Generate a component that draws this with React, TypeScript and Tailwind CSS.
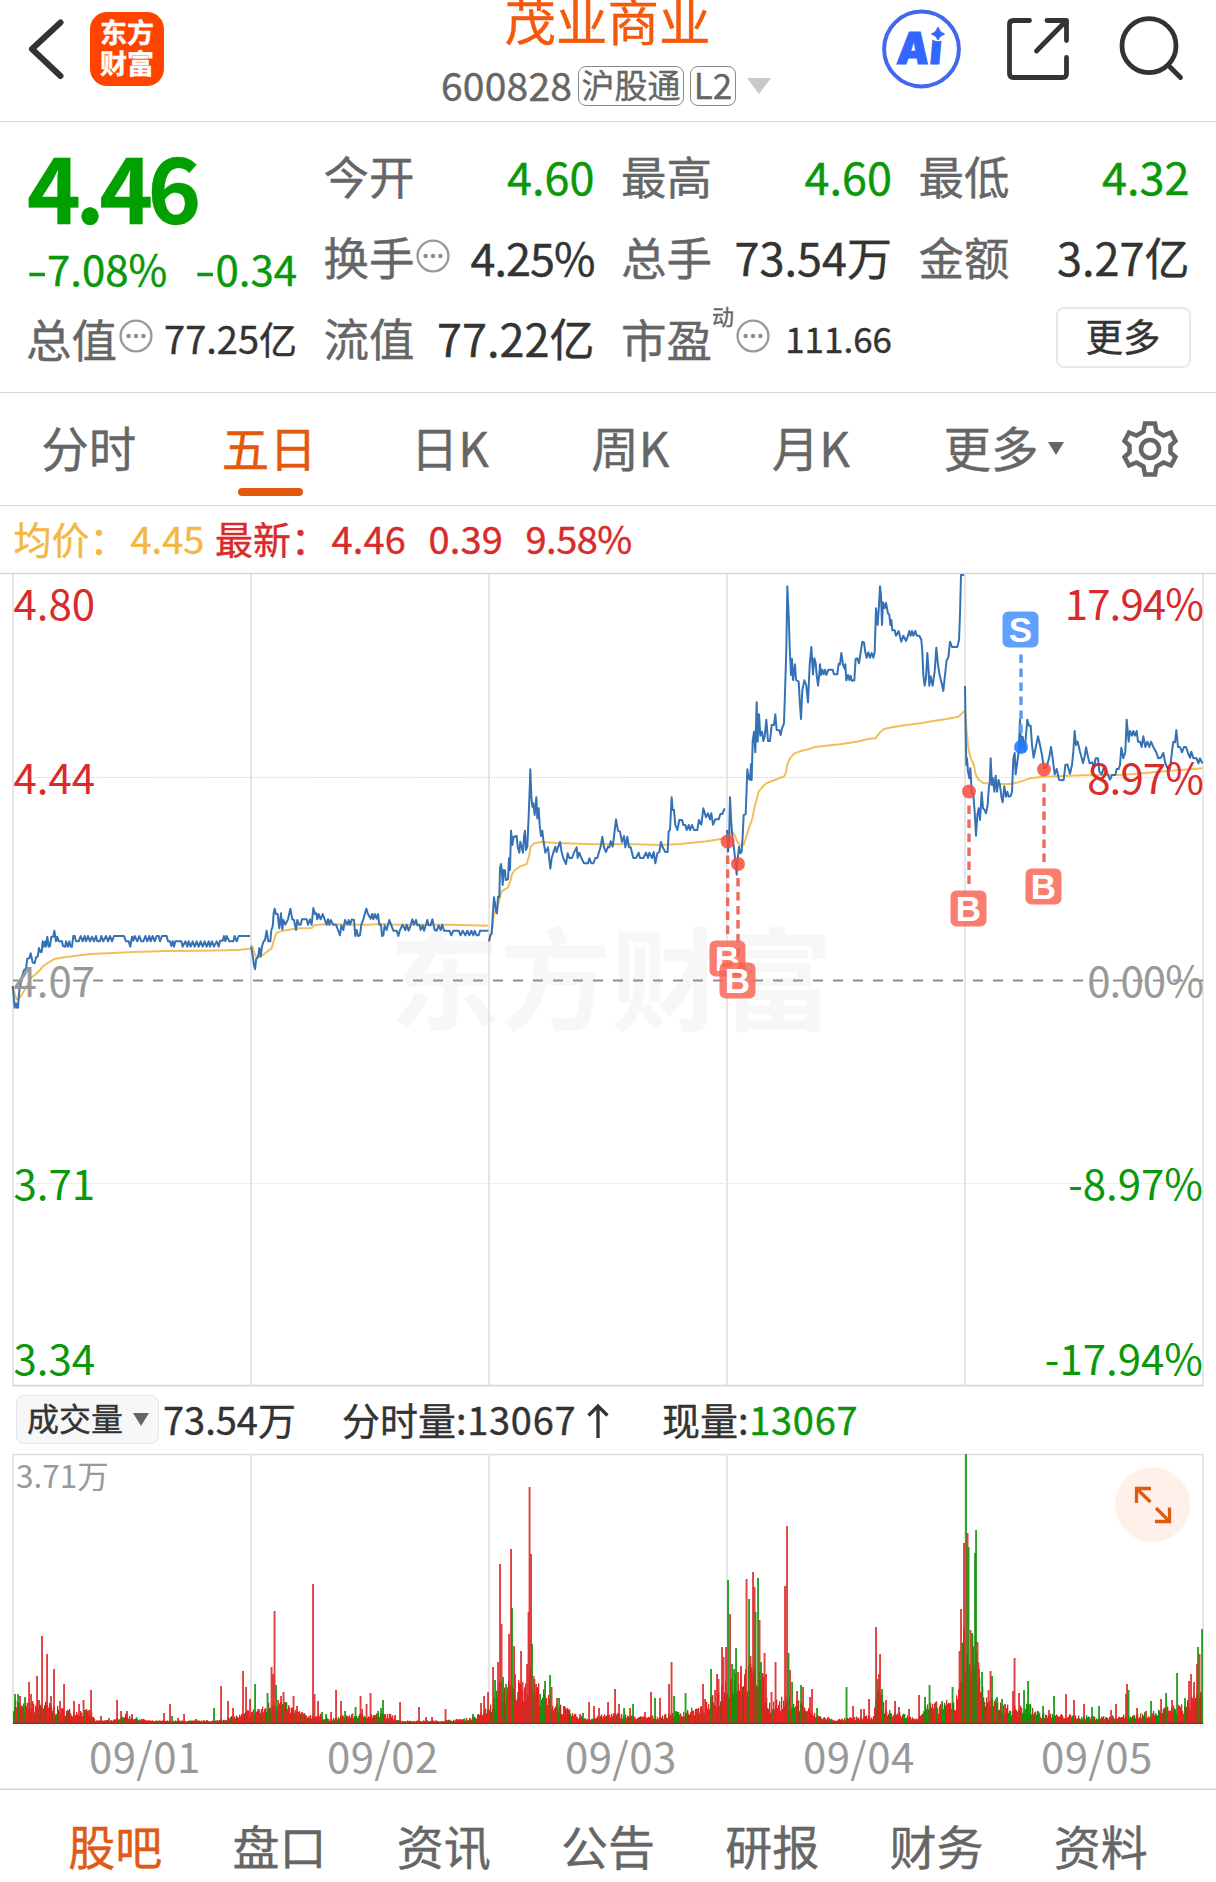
import React from "react";

const DAY_LINES = [13, 251, 489, 727, 965, 1203];

type Series = { dx: number; dy: number; price: string; avg: string };

// Each trading day is plotted on its own grid of one-third pixels, offset by dx / dy.
const SERIES: Series[] = [
  {
    dx: 0,
    dy: 740,
    price:
      "38,738 41,770 44,803 48,790 51,803 54,803 58,750 62,730 66,710 72,690 78,686 82,656 88,655 92,640 98,668 104,670 108,652 113,650 117,624 121,636 125,636 128,604 131,620 136,604 138,620 142,590 146,620 150,618 154,590 160,590 163,572 168,604 172,590 176,604 186,604 189,618 196,620 198,604 204,620 208,604 212,620 216,620 220,588 224,588 228,604 236,604 242,588 248,604 254,588 258,604 264,588 270,604 276,590 282,604 288,588 292,604 300,604 304,588 310,604 318,588 324,604 330,588 336,604 342,588 372,588 378,604 386,604 391,620 396,590 400,602 404,588 412,604 418,588 424,604 430,604 436,588 442,604 448,588 452,604 458,588 464,604 470,588 476,588 480,604 486,588 500,588 504,604 510,604 514,618 518,604 522,620 526,604 544,604 548,620 556,604 562,620 566,604 572,620 578,604 584,620 590,604 596,620 602,604 608,620 614,604 620,620 626,604 630,620 636,604 642,620 650,604 656,620 660,602 668,602 672,588 676,604 680,588 688,604 700,604 704,588 710,604 716,588 750,588",
    avg: "38,738 44,760 50,778 60,772 80,740 90,716 105,704 120,690 130,678 145,668 165,656 200,651 270,642 340,639 400,636 500,633 600,632 680,631 720,629 750,626",
  },
  {
    dx: 0,
    dy: 740,
    price:
      "753,620 757,640 762,675 765,688 769,655 774,652 778,624 782,650 786,620 790,606 795,600 800,572 805,604 811,604 814,570 818,560 821,520 824,506 828,522 833,522 836,550 838,565 843,520 847,568 850,540 856,554 864,538 871,506 877,538 882,540 888,570 892,540 897,554 902,554 906,538 920,538 924,554 930,538 935,554 940,504 945,522 949,520 952,538 956,522 962,538 968,522 974,538 980,554 984,538 988,554 992,540 1000,554 1008,554 1014,570 1020,586 1024,556 1030,570 1035,540 1042,554 1046,540 1050,554 1056,538 1062,540 1066,588 1070,570 1074,588 1080,586 1084,554 1090,538 1095,520 1099,506 1104,522 1112,536 1116,522 1120,538 1124,522 1130,536 1134,522 1138,554 1143,554 1146,588 1150,586 1154,556 1160,570 1164,554 1168,540 1174,556 1180,572 1190,572 1195,588 1200,570 1208,554 1216,570 1220,554 1226,572 1232,556 1237,538 1242,554 1248,540 1252,556 1258,554 1262,570 1268,556 1272,572 1278,554 1282,540 1286,556 1292,556 1297,538 1304,570 1310,572 1316,556 1322,570 1327,554 1332,572 1348,572 1354,586 1360,572 1376,572 1382,586 1388,572 1396,586 1402,572 1408,586 1414,572 1420,586 1424,572 1430,586 1436,586 1440,572 1465,572",
    avg: "753,614 758,622 766,648 775,650 785,648 795,640 808,630 815,625 820,606 826,588 830,578 850,572 880,567 900,565 936,564 942,556 970,553 1100,554 1140,552 1200,554 1350,554 1465,557",
  },
  {
    dx: 480,
    dy: 730,
    price:
      "27,634 31,615 35,612 38,560 42,502 45,520 48,545 51,550 54,500 58,500 60,415 63,402 66,430 68,465 71,420 75,422 77,450 84,448 87,385 90,420 93,302 97,345 101,320 110,318 113,350 118,368 121,335 125,350 129,368 132,320 135,302 138,360 142,350 146,260 149,180 151,118 154,200 157,230 160,220 164,255 169,202 172,265 176,235 179,285 183,318 187,302 190,330 196,368 204,352 207,380 211,416 215,385 220,368 226,350 230,366 234,352 240,336 245,366 250,385 258,402 263,370 268,384 276,384 282,368 290,352 293,384 298,368 304,384 312,400 324,400 328,385 334,400 340,400 346,384 352,384 357,366 362,350 367,320 372,352 378,366 384,350 388,352 392,334 398,350 402,320 408,268 414,302 420,305 426,336 432,318 436,352 442,320 447,352 452,352 460,384 468,384 476,368 480,384 490,384 498,368 504,384 508,368 516,384 521,366 526,400 532,370 538,366 543,336 548,352 556,366 563,366 566,305 570,300 575,202 578,240 582,240 586,285 592,300 598,270 606,270 610,285 616,285 620,300 626,285 630,300 636,285 642,300 652,300 657,270 664,284 670,235 678,262 684,250 690,268 694,250 699,284 706,268 716,268 721,252 727,252 734,235",
    avg: "27,634 36,600 42,552 50,540 58,510 64,485 74,478 84,473 92,450 96,432 105,420 120,410 140,402 148,375 152,350 162,340 185,336 230,339 340,343 440,342 540,345 600,342 680,334 727,326 735,325",
  },
  {
    dx: 700,
    dy: 565,
    price:
      "81,795 84,860 87,835 90,697 93,760 97,815 102,850 107,895 110,929 113,885 117,845 121,865 125,860 128,815 131,750 137,748 140,670 142,613 146,640 150,645 153,598 155,645 158,530 162,500 166,562 170,412 173,530 177,448 181,512 186,500 190,528 194,515 199,464 204,528 210,528 215,480 222,480 226,448 230,495 238,496 242,510 246,490 252,475 256,350 259,250 262,64 266,150 269,245 273,330 276,282 279,345 285,298 288,345 296,350 300,420 303,462 307,375 313,346 319,362 324,412 329,300 334,246 339,328 343,280 347,295 350,330 354,362 358,328 360,298 363,330 367,314 371,328 375,314 379,330 385,314 398,314 402,328 412,328 416,296 420,298 424,264 429,298 434,312 436,298 439,346 444,330 448,345 452,332 455,347 463,346 467,282 472,280 477,295 482,262 487,230 492,232 496,262 500,278 505,262 510,278 515,264 520,278 524,262 528,130 533,180 537,120 540,64 543,90 546,180 549,112 554,130 558,114 564,145 568,150 571,180 574,165 577,196 584,196 588,212 596,198 600,215 604,230 610,212 618,228 624,212 628,198 632,212 636,198 640,212 646,198 650,212 658,212 664,225 667,260 670,330 674,362 678,340 682,264 686,320 688,362 692,334 698,362 704,320 709,248 714,300 719,330 724,350 730,378 735,330 740,285 745,278 750,230 756,246 772,246 777,225 780,150 783,30 792,30",
    avg: "81,830 90,802 96,800 103,808 112,830 122,842 132,838 140,812 148,785 156,765 164,725 176,680 188,665 200,654 225,645 240,638 252,635 258,622 263,595 270,580 282,566 300,559 325,553 340,547 370,543 420,538 470,530 505,522 526,520 540,502 552,492 575,487 620,480 660,475 700,468 740,462 775,455 785,446 795,436",
  },
  {
    dx: 950,
    dy: 565,
    price:
      "45,363 47,500 49,600 51,580 54,620 58,640 61,610 65,680 70,690 74,740 78,812 82,750 86,730 90,765 95,682 99,730 104,735 108,745 113,720 117,660 119,660 122,580 126,660 129,640 133,680 137,632 141,680 146,645 150,662 155,700 158,712 163,664 168,695 172,680 176,695 182,693 186,680 190,580 194,564 197,628 202,590 206,560 210,464 214,562 218,515 224,560 228,510 232,464 237,482 242,482 246,540 251,578 257,548 264,514 270,540 276,570 282,610 290,605 297,580 303,546 308,580 314,628 320,612 327,644 336,646 341,645 346,600 352,598 360,626 366,600 370,560 374,498 378,540 383,530 390,560 395,578 399,595 404,575 408,547 414,575 419,595 427,592 432,608 437,580 444,580 448,620 455,628 460,612 468,612 474,630 480,644 486,630 492,630 496,630 500,612 506,612 510,600 514,548 520,580 526,560 530,464 536,530 540,498 546,512 550,498 555,512 560,498 564,530 570,530 575,546 580,514 586,546 592,530 598,546 603,530 610,546 618,560 625,580 633,578 640,564 646,595 654,612 660,612 666,560 670,530 675,532 679,496 684,546 690,546 696,562 702,546 708,546 714,564 720,578 724,560 730,580 740,580 745,595 750,580 757,595",
    avg: "45,436 50,500 55,550 62,580 72,600 76,625 84,642 100,654 140,657 180,657 205,652 240,640 280,635 400,631 520,629 560,626 680,616 757,610",
  },
];

// Typical minute volume along the x axis: [x, height].
const VOLUME_BASE: [number, number][] = [
  [13, 25], [22, 18], [40, 22], [60, 14], [90, 12], [95, 2], [115, 3], [122, 9], [135, 5], [150, 2], [215, 2], [240, 8], [248, 12], [262, 15], [275, 25], [290, 16], [305, 8], [320, 8], [330, 3], [345, 8], [370, 9], [388, 9], [400, 2], [440, 2], [465, 4], [478, 8], [490, 18], [500, 40], [515, 40], [530, 50], [545, 28], [560, 18], [575, 8], [590, 4], [610, 10], [640, 6], [660, 7], [680, 12], [700, 15], [715, 28], [728, 50], [740, 55], [760, 55], [768, 20], [785, 25], [800, 22], [812, 10], [825, 5], [835, 3], [850, 5], [872, 7], [878, 35], [886, 12], [900, 10], [915, 4], [925, 18], [955, 22], [963, 90], [975, 80], [985, 25], [1000, 20], [1010, 15], [1030, 18], [1040, 9], [1060, 8], [1100, 6], [1120, 7], [1150, 10], [1165, 15], [1185, 18], [1200, 40], [1203, 3],
];

// Spikes as "x,height" followed by g for a falling minute.
const SPIKES =
  "15,30g 18,30g 20,28 25,27g 29,42 31,30 37,48 39,24 42,88 47,70 51,28 54,55 60,23 64,40 74,23 79,20 83.5,24 89,14 91,34 101,8 109,6 117,24 121,13 127,13 132,10 143,5 164,11 170,20 172,8g 178,6 184,10 196,5 207,4 214,16g 221,38 228,23 233,16 243,53 246,37 247.5,14 250,25 255,40g 258,15 262,15 267.5,31g 271.5,57 273,50 274.5,113 276,39g 278,24 281,28 283.5,32 287,15 293.5,28 297,18 302,12 310,8 313,140 314.5,30 318,23 322,12g 326,10g 331,12 336,34 341,23 345,13g 355.5,17g 360.5,28 362,15 366.5,20 370.5,31 378,13g 381,16g 383,24g 395,9 400,22 419,17 426,7 432,7 445.5,15 460,5 473,10g 481,21 484,28 488,32 493,57 495,44g 498,62 500,160 501.5,100 503,47g 506,40g 509,90 511,175 512,116g 514,78 515,50 518,32 521,73 522.5,42 525,37 527,60 528.5,112 529.5,237 531,170 532,80g 533.5,48 536,40 540,30g 545,43g 550,49g 551.5,37 557,26 559,26g 564,18 580,10 583,11g 589,22 594,18 599,16 608,22 615,35 619,20 624,16g 630,16 633,20g 645,12 651,32 655,26g 660,26 669,40 671.5,62 674,28g 685.5,31g 691,12 697,15 703,40 705,25 711,55g 715,34 717,50 718.5,45 722,77 723.5,67 726,77 728,144g 730,110 732,60g 734,55g 736,76g 738,52 741,58 745,50 746.5,145 749,125g 750.5,68 753,152 754.5,137 755.5,112g 758,146g 759.5,104 761,62g 762.5,50 764.5,71 766,50 771.5,32 775.5,62 785,138 787,198 788.5,71g 790,54 792,42g 797,33 801,39g 803,37 810,27 812,35 817,16g 828,7 846.5,37g 853,18 861,15 864,15 869,25 876,97 877.5,45g 879,50 880,70 882,35g 886,24 895,23 899,17 909,15 919,29 925,27g 929.5,39g 936,18g 942,23g 947,20 952.5,37g 957,25 959.5,73 961,115 964,181 966,270g 967.5,191 968.5,177g 970.5,94 972,91g 973.5,62 975,171g 976,194g 977.5,82 979,55 982,52g 988.5,34 990.5,53 992,48g 997,27g 1002,25g 1005,20 1013,33 1014.5,66 1019,31 1024,34g 1028,43g 1030,20g 1043,18g 1049,14 1054,28g 1066,30 1074,24 1084,20 1092,17g 1099,18g 1111,14 1116,20 1126,30 1127,40 1128.5,34g 1137,16 1146,13 1151,23g 1161,25 1166,31g 1172,24 1177,51g 1185,26g 1189,43 1191,50 1194,42 1197,60 1198,77g 1199.5,70 1202,95g";

const RED = "#ee2222";
const GREEN = "#0a9608";
const BROWN = "#a23c16";

type Bar = { x: number; h: number; fill: string };

function baseHeight(x: number) {
  for (let i = 1; i < VOLUME_BASE.length; i++) {
    const [x1, h1] = VOLUME_BASE[i];
    const [x0, h0] = VOLUME_BASE[i - 1];
    if (x <= x1) return h0 + ((h1 - h0) * (x - x0)) / (x1 - x0);
  }
  return 2;
}

function buildBars(): Bar[] {
  let seed = 7;
  const rand = () => {
    seed = (seed * 16807) % 2147483647;
    return seed / 2147483647;
  };
  const bars: Bar[] = [];
  for (let x = 13; x < 1202; x += 1) {
    const h = 1.5 + baseHeight(x) * (0.45 + 0.65 * rand());
    const c = rand();
    const greenShare = x > 965 && x < 1160 ? 0.25 : 0.14;
    bars.push({ x, h, fill: c < greenShare ? GREEN : c < greenShare + 0.35 ? BROWN : RED });
  }
  return bars;
}

const BARS = buildBars();
const SPIKE_BARS: Bar[] = SPIKES.split(" ").map((s) => {
  const green = s.endsWith("g");
  const [x, h] = s.replace("g", "").split(",").map(Number);
  return { x, h, fill: green ? GREEN : "#dd2626" };
});

function Dots() {
  return (
    <svg width="34" height="34" viewBox="0 0 34 34" className="shrink-0">
      <circle cx="17" cy="17" r="15.4" fill="none" stroke="#9a9a9a" strokeWidth="2.4" />
      <circle cx="9.6" cy="17" r="2.2" fill="#8c8c8c" />
      <circle cx="17" cy="17" r="2.2" fill="#8c8c8c" />
      <circle cx="24.4" cy="17" r="2.2" fill="#8c8c8c" />
    </svg>
  );
}

function Header() {
  return (
    <header className="flex h-[122px] items-start border-b-[1.5px] border-[#d6d6d6]">
      <svg width="90" height="98" viewBox="0 0 90 98" className="shrink-0">
        <path d="M60.500 22.500 32 49 60.500 76" fill="none" stroke="#333" strokeWidth="6" strokeLinecap="round" strokeLinejoin="round" />
      </svg>
      <div className="mt-[12px] flex h-[74px] w-[74px] shrink-0 flex-col items-center justify-center rounded-[17px] bg-[#ff4400] pb-[5px] text-[27px] font-bold leading-[31px] text-white">
        <span>东方</span>
        <span>财富</span>
      </div>
      <div className="flex h-[121px] w-[718px] shrink-0 flex-col pl-[277px]">
        <div className="h-[53px] pl-[63.500px] text-[51.500px] leading-[37px] whitespace-nowrap text-[#f4590c]">茂业商业</div>
        <div className="-mt-px flex h-[68px] items-center">
          <span className="mt-[-5px] w-[137px] text-[39px] leading-[60px] tracking-[0.200px] text-[#666]">600828</span>
          <span className="flex h-[40px] w-[106px] items-center justify-center rounded-[8px] border-[1.5px] border-[#8a8a8a] pb-[5px] text-[33px] leading-[34px] text-[#666]">沪股通</span>
          <span className="ml-[6px] flex h-[40px] w-[46px] items-center justify-center rounded-[8px] border-[1.5px] border-[#8a8a8a] pb-[5px] text-[35px] leading-[34px] text-[#666]">L2</span>
          <svg width="24" height="16" viewBox="0 0 24 16" className="ml-[11px]">
            <path d="M0 0H24L12 16Z" fill="#c8c8c8" />
          </svg>
        </div>
      </div>
      <svg width="80" height="98" viewBox="882 0 80 98" className="shrink-0">
        <circle cx="921.500" cy="49" r="37.400" fill="none" stroke="#4169ee" strokeWidth="4" />
        <g transform="translate(896 63.500) skewX(-5) scale(0.92 1)">
          <text x="0" y="0" fontFamily="Inter, sans-serif" fontWeight="900" fontSize="44" letterSpacing="0.500" fill="#3366ff" stroke="#3366ff" strokeWidth="1.200">
            Ai
          </text>
        </g>
        <circle cx="938" cy="32.500" r="8.800" fill="#fff" />
        <path d="M938 27Q939.500 32.500 944.500 34Q939.500 35.500 938 40Q936.500 35.500 931.500 34Q936.500 32.500 938 27Z" fill="#3366ff" stroke="#3366ff" />
      </svg>
      <svg width="254" height="98" viewBox="962 0 254 98" className="shrink-0">
        <g fill="none" stroke="#333" strokeWidth="4.800" strokeLinecap="round" strokeLinejoin="round">
          <path d="M1029.500 20.500H1013.500Q1009.500 20.500 1009.500 24.500V73.500Q1009.500 77.500 1013.500 77.500H1062.500Q1066.500 77.500 1066.500 73.500V57.500" />
          <path d="M1047 20.500H1066.500V40.500M1066.500 20.500 1036.500 51" />
          <circle cx="1149" cy="45.700" r="27" />
          <path d="M1169 66 1180.500 77.500" />
        </g>
      </svg>
    </header>
  );
}

function Cell({ label, value, tone = "text-[#333]", dots = false }: { label: string; value: string; tone?: string; dots?: boolean }) {
  return (
    <div className="flex h-[81px] items-center justify-between whitespace-nowrap text-[45px] leading-[81px]">
      <span className="-ml-[2px] flex items-center gap-[1px] text-[45.500px] text-[#666]">
        {label}
        {dots && <Dots />}
      </span>
      <span className={tone + (dots ? " tracking-[-1px]" : "")}>{value}</span>
    </div>
  );
}

function Minus() {
  return <span className="inline-block w-[20px] origin-left scale-x-[1.400]">-</span>;
}

function Quote() {
  const g = "text-[#0a980a]";
  return (
    <section className="grid h-[271px] grid-cols-[270px_269px_269px_269px] grid-rows-[81px_81px_82px] gap-x-[28.500px] border-b-[1.5px] border-[#d6d6d6] pt-[12.500px] pl-[27px]">
      <div className="row-span-2 flex flex-col text-[#00a000]">
        <span className="mt-[-2px] h-[102px] text-[91px] font-bold leading-[102px] tracking-[-5.500px]">4.46</span>
        <span className="flex justify-between whitespace-nowrap text-[42px] leading-[66px] text-[#0a980a]">
          <span>
            <Minus />
            7.08%
          </span>
          <span>
            <Minus />
            0.34
          </span>
        </span>
      </div>
      <Cell label="今开" value="4.60" tone={g} />
      <Cell label="最高" value="4.60" tone={g} />
      <Cell label="最低" value="4.32" tone={g} />
      <Cell label="换手" value="4.25%" dots />
      <Cell label="总手" value="73.54万" />
      <Cell label="金额" value="3.27亿" />
      <div className="flex items-center justify-between whitespace-nowrap text-[38px] leading-[82px] text-[#333]">
        <span className="flex items-center gap-[2px] -ml-px text-[45.500px] text-[#666]">
          总值
          <span className="-mt-[3px]">
            <Dots />
          </span>
        </span>
        77.25亿
      </div>
      <Cell label="流值" value="77.22亿" />
      <div className="flex items-center justify-between whitespace-nowrap text-[35px] leading-[82px] text-[#333]">
        <span className="-ml-[2px] flex items-center text-[45.500px] text-[#666]">
          市盈
          <span className="-mt-[45px] mr-[2px] text-[22px] leading-[30px]">动</span>
          <span className="-mt-[3px]">
            <Dots />
          </span>
        </span>
        111.66
      </div>
      <div className="flex items-center justify-end">
        <button className="mr-[-1px] mb-[1px] flex h-[61px] w-[135px] items-center justify-center rounded-[8px] border-2 border-[#e6e8ea] pb-[5px] text-[37.500px] leading-[50px] text-[#333]">
          更多
        </button>
      </div>
    </section>
  );
}

function PeriodTabs() {
  const tabs = ["分时", "五日", "日K", "周K", "月K"];
  return (
    <nav className="flex h-[113px] items-start border-b-[1.5px] border-[#d6d6d6] text-[47.500px] leading-[108px] text-[#666]">
      {tabs.map((t) => (
        <div key={t} className={t === "五日" ? "flex w-[180.500px] flex-col items-center text-[#e2590d]" : "flex w-[180.500px] flex-col items-center"}>
          <span className="-ml-[3px] h-[95px]">{t}</span>
          {t === "五日" && <span className="h-[7.500px] w-[65px] rounded-full bg-[#e2590d]" />}
        </div>
      ))}
      <div className="ml-[41px] flex w-[178px] items-start">
        更多
        <svg width="16" height="13" viewBox="0 0 16 13" className="mt-[49px] ml-[9px]">
          <path d="M0 0H16L8 13Z" fill="#666" />
        </svg>
      </div>
      <svg width="56" height="56" viewBox="1 1 56 56" className="mt-[28px]">
        <g fill="none" stroke="#666" strokeWidth="4.500">
          <path d="M24 3.500H34L35.500 11.500L42.500 15.500L50 12.500L54.500 21L49.500 25.500V32.500L54.500 37L50 45.500L42.500 42.500L35.500 46.500L34 54.500H24L22.500 46.500L15.500 42.500L8 45.500L3.500 37L8.500 32.500V25.500L3.500 21L8 12.500L15.500 15.500L22.500 11.500Z" />
          <circle cx="29" cy="29" r="9" />
        </g>
      </svg>
    </nav>
  );
}

function Legend() {
  return (
    <div className="flex h-[67px] items-start whitespace-pre pl-[13.500px] text-[38px] leading-[63px] text-[#d92b2b]">
      <span className="w-[117px] text-[#f3b843]">均价：</span>
      <span className="w-[84.500px] text-[#f3b843]">4.45</span>
      <span className="w-[116.500px]">最新：</span>
      <span className="w-[97px] tracking-[0.200px]">4.46</span>
      <span className="w-[97px] tracking-[0.200px]">0.39</span>
      <span className="tracking-[-0.500px]">9.58%</span>
    </div>
  );
}

function Marker({ x, y, bx, by, label }: { x: number; y: number; bx: number; by: number; label: "B" | "S" }) {
  const buy = label === "B";
  const fill = buy ? "#f8614f" : "#3d8bff";
  return (
    <g>
      <line
        x1={x}
        x2={x}
        y1={buy ? y + 14 : by + 43}
        y2={buy ? by - 6 : y - 8}
        stroke={buy ? "#ec6a5e" : "#5a9bee"}
        strokeWidth="3.400"
        strokeDasharray="8.500 5.500"
      />
      <circle cx={x} cy={y} r="7" fill={buy ? "#f94b3c" : "#1f7bff"} opacity="0.85" />
      <rect x={bx} y={by} width="36" height="36" rx="6" fill={fill} opacity="0.82" />
      <text x={bx + 18} y={by + 30.7} textAnchor="middle" fontFamily="Liberation Sans, sans-serif" fontWeight="700" fontSize="35" fill="#fff">
        {label}
      </text>
    </g>
  );
}

function SignedLabel({ text, y, fill }: { text: string; y: number; fill: string }) {
  const negative = text.startsWith("-");
  return (
    <text x="1203" y={y} fontSize="42" textAnchor="end" letterSpacing={negative ? "0" : "-0.900"} fill={fill}>
      {text}
    </text>
  );
}

function PriceChart() {
  const left: [string, number, string][] = [
    ["4.80", 620, "#d92b2b"],
    ["4.44", 794, "#d92b2b"],
    ["4.07", 997, "#999"],
    ["3.71", 1199.5, "#0a980a"],
    ["3.34", 1375, "#0a980a"],
  ];
  const right: [string, number, string][] = [
    ["17.94%", 620, "#d92b2b"],
    ["8.97%", 794, "#d92b2b"],
    ["0.00%", 997, "#999"],
    ["-8.97%", 1199.5, "#0a980a"],
    ["-17.94%", 1375, "#0a980a"],
  ];
  return (
    <svg width="1216" height="815" viewBox="0 572 1216 815" className="block">
      <text x="611" y="1022" textAnchor="middle" fontSize="111" fontWeight="700" fill="#f7f7f7">
        东方财富
      </text>
      <line x1="0" x2="1216" y1="573.500" y2="573.500" stroke="#d6d6d6" strokeWidth="1.300" />
      {DAY_LINES.map((x) => (
        <line key={x} x1={x} x2={x} y1="574" y2="1386" stroke="#e2e2e2" strokeWidth="1.700" />
      ))}
      <line x1="13" x2="1203" y1="1385.700" y2="1385.700" stroke="#d6d6d6" strokeWidth="1.700" />
      <line x1="13" x2="1203" y1="777.500" y2="777.500" stroke="#d4d4d4" strokeDasharray="1.300 1.300" />
      <line x1="13" x2="1203" y1="1183.500" y2="1183.500" stroke="#dedede" strokeDasharray="1.300 1.300" />
      <line x1="13" x2="1203" y1="980.500" y2="980.500" stroke="#8f8f8f" strokeWidth="1.900" strokeDasharray="10 10" />
      {SERIES.map((s) => (
        <g key={s.price.slice(0, 12)} transform={`translate(${s.dx} ${s.dy}) scale(0.33333)`} fill="none" strokeLinejoin="round">
          <polyline points={s.avg} stroke="#f0bf5c" strokeWidth="6" />
          <polyline points={s.price} stroke="#3572b5" strokeWidth="6" />
        </g>
      ))}
      {left.map(([t, y, c]) => (
        <text key={t} x="13.500" y={y} fontSize="42" fill={c}>
          {t}
        </text>
      ))}
      {right.map(([t, y, c]) => (
        <SignedLabel key={t} text={t} y={y} fill={c} />
      ))}
      <Marker x={727.600} y={841.500} bx={709.500} by={940.500} label="B" />
      <Marker x={738} y={864} bx={719.500} by={962.500} label="B" />
      <Marker x={969} y={791.500} bx={950.500} by={890.500} label="B" />
      <Marker x={1044} y={769.500} bx={1025.500} by={868.500} label="B" />
      <Marker x={1021} y={747} bx={1002.500} by={611.500} label="S" />
    </svg>
  );
}

function VolumeBar() {
  return (
    <div className="flex h-[66px] items-start whitespace-nowrap text-[38px] leading-[63px] text-[#333]">
      <button className="mt-[8px] ml-[16px] flex h-[49px] w-[143px] items-center rounded-[8px] border-[1.5px] border-[#e3e5e8] bg-[#f6f7f9] pb-[5px] pl-[10px] text-[32px] leading-[43px]">
        成交量
        <svg width="16" height="13" viewBox="0 0 16 13" className="mt-[4px] ml-[10px]">
          <path d="M0 0H16L8 13Z" fill="#666" />
        </svg>
      </button>
      <span className="ml-[4px] w-[179px]">73.54万</span>
      <span className="w-[241px]">
        分时量<span className="tracking-[0.700px]">:13067</span>
      </span>
      <svg width="24" height="38" viewBox="0 0 24 38" className="mt-[15px] ml-[3px] mr-[52px]">
        <path d="M12 36V5M2.500 13.500 12 4 21.500 13.500" fill="none" stroke="#333" strokeWidth="3.300" />
      </svg>
      <span>
        现量<span className="tracking-[0.700px]">:<span className="text-[#0a980a]">13067</span></span>
      </span>
    </div>
  );
}

function VolumeChart() {
  const base = 1724;
  return (
    <div className="relative">
      <svg width="1216" height="337" viewBox="0 1453 1216 337" className="block">
        <line x1="13" x2="1203" y1="1454.500" y2="1454.500" stroke="#dcdcdc" strokeWidth="1.300" />
        {DAY_LINES.map((x) => (
          <line key={x} x1={x} x2={x} y1="1454" y2="1724" stroke="#e2e2e2" strokeWidth="1.700" />
        ))}
        {BARS.map((b) => (
          <rect key={b.x} x={b.x} y={base - b.h} width="1.300" height={b.h} fill={b.fill} />
        ))}
        {SPIKE_BARS.map((b, i) => (
          <rect key={i} x={b.x - 0.9} y={base - b.h} width="1.900" height={b.h} fill={b.fill} opacity="0.88" />
        ))}
        <rect x="13" y="1722.500" width="1190" height="1.500" fill="#963018" />
        <text x="16" y="1488" fontSize="31.500" fill="#999">
          3.71万
        </text>
        {["09/01", "09/02", "09/03", "09/04", "09/05"].map((d, i) => (
          <text key={d} x={144.8 + i * 238} y="1772.500" fontSize="42" letterSpacing="0.400" textAnchor="middle" fill="#999">
            {d}
          </text>
        ))}
        <line x1="0" x2="1216" y1="1789.300" y2="1789.300" stroke="#d6d6d6" strokeWidth="1.500" />
      </svg>
      <button className="absolute top-[14px] left-[1115px] flex h-[75px] w-[75px] items-center justify-center rounded-full bg-[#fff1ea]">
        <svg width="38" height="38" viewBox="0 0 38 38">
          <path d="M17 2.500H2.500V17M2.500 2.500 16.500 16M35.500 21.500V35.500H21M35.500 35.500 22 22" fill="none" stroke="#e05a12" strokeWidth="3.300" />
        </svg>
      </button>
    </div>
  );
}

function BottomTabs() {
  const tabs = ["股吧", "盘口", "资讯", "公告", "研报", "财务", "资料"];
  return (
    <nav className="grid h-[92px] grid-cols-7 overflow-hidden px-[33px] text-center text-[47px] leading-[109px] text-[#666]">
      {tabs.map((t, i) => (
        <span key={t} className={i === 0 ? "text-[#dd5b16]" : ""}>
          {t}
        </span>
      ))}
    </nav>
  );
}

export default function App() {
  return (
    <main className="h-[1882px] w-[1216px] overflow-hidden bg-white font-['Noto_Sans_CJK_SC',sans-serif] [-webkit-text-stroke:0.400px]">
      <Header />
      <Quote />
      <PeriodTabs />
      <Legend />
      <div className="-mt-px">
        <PriceChart />
      </div>
      <VolumeBar />
      <VolumeChart />
      <BottomTabs />
    </main>
  );
}
